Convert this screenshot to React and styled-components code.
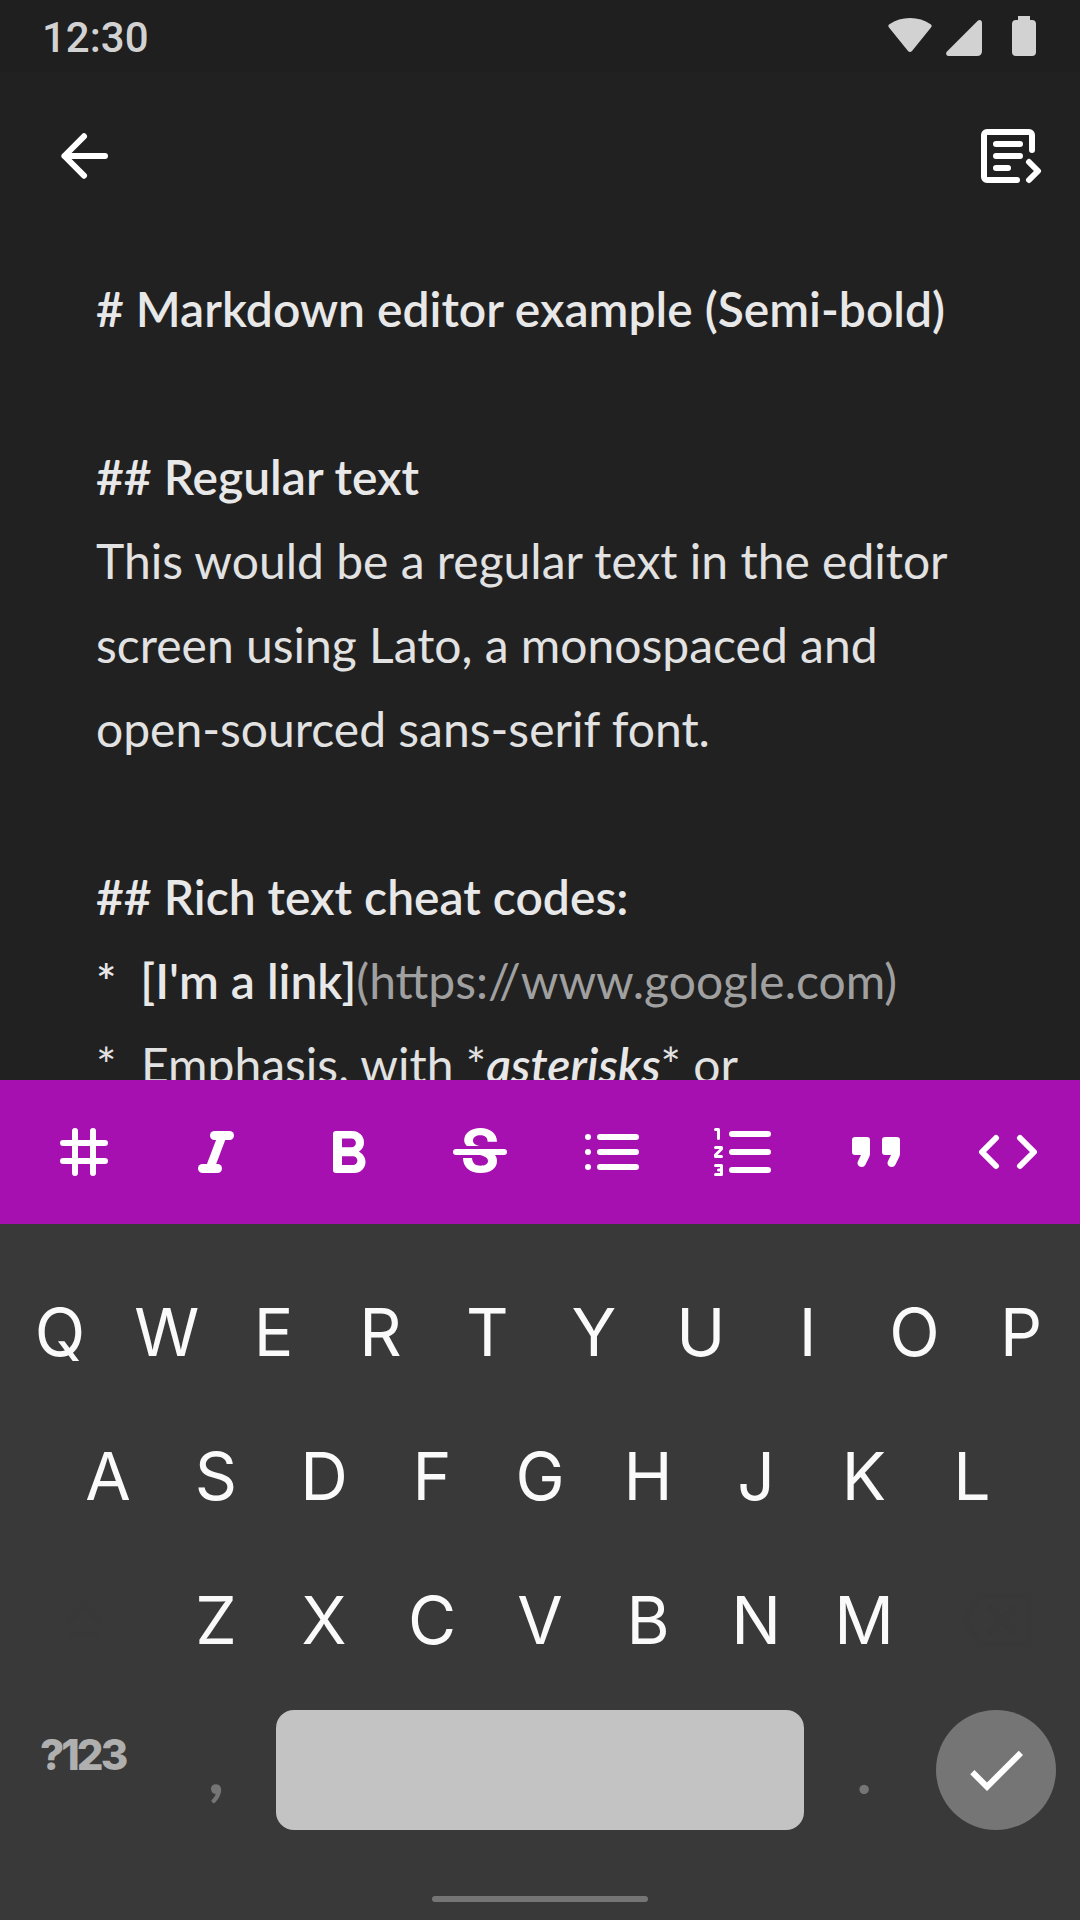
import React from "react";
import styled, { createGlobalStyle } from "styled-components";

const GlobalStyle = createGlobalStyle`
  * { box-sizing: border-box; }
  html, body { margin: 0; padding: 0; background: #212121; }
  button { border: 0; padding: 0; background: none; color: inherit; font: inherit; }
`;

const Screen = styled.div`
  width: 1080px;
  height: 1920px;
  display: flex;
  flex-direction: column;
  overflow: hidden;
  background: #212121;
`;

const StatusBar = styled.header`
  height: 72px;
  flex: none;
  display: flex;
  align-items: center;
  justify-content: space-between;
  padding: 0 36px 0 42px;
  background: #1f1f1f;
  color: #d2d2d2;
`;

const Clock = styled.span`
  font: 500 42px/72px Roboto, sans-serif;
  padding-top: 4px;
`;

const StatusIcons = styled.div`
  display: flex;
`;

const AppBar = styled.nav`
  height: 168px;
  flex: none;
  display: flex;
  align-items: center;
  justify-content: space-between;
  padding: 0 36px 0 48px;
  color: #fff;
`;

const IconButton = styled.button`
  width: 72px;
  height: 72px;
  display: block;
`;

const Icon = styled.svg`
  display: block;
  width: ${(p) => p.$w || 72}px;
  height: ${(p) => p.$h || 72}px;
  fill: none;
  stroke: currentColor;
  stroke-width: 6;
  stroke-linecap: round;
  stroke-linejoin: round;
`;

const SolidIcon = styled(Icon)`
  fill: currentColor;
  stroke: none;
`;

const FineStroke = styled.path`
  stroke-width: 3;
`;

const Editor = styled.main`
  flex: none;
  height: 840px;
  padding: 27px 96px 0;
  overflow: hidden;
  color: #e2e2e2;
  font: 400 48px/84px Lato, sans-serif;
`;

const Line = styled.p`
  margin: 0;
  height: 84px;
  white-space: pre;
`;

const HeadingLine = styled(Line)`
  color: #e8e8e8;
  font-weight: 600;
`;

const Strong = styled.span`
  color: #e8e8e8;
  font-weight: 600;
  font-style: ${(p) => (p.$italic ? "italic" : "normal")};
`;

const Url = styled.span`
  color: #a0a0a0;
`;

const Toolbar = styled.div`
  height: 144px;
  flex: none;
  display: flex;
  align-items: center;
  gap: 60px;
  padding: 0 36px 0 48px;
  background: #a610b0;
  color: #fff;
`;

const Keyboard = styled.section`
  flex: 1;
  display: flex;
  flex-direction: column;
  background: #393939;
  color: #fafafa;
  padding-top: 36px;
`;

const KeyRow = styled.div`
  height: 144px;
  flex: none;
  display: flex;
  align-items: center;
  padding-left: ${(p) => p.$inset}px;
`;

const Key = styled.button`
  width: ${(p) => p.$w || 108}px;
  flex: none;
  font: 400 66px/144px Inter, sans-serif;
  text-align: center;
`;

const GhostKey = styled.button`
  display: flex;
  width: ${(p) => p.$w}px;
  height: 72px;
  padding-left: ${(p) => p.$lead}px;
  color: #383838;
`;

const BottomRow = styled.div`
  height: 120px;
  margin-top: 18px;
  display: flex;
  padding: 0 24px 0 40px;
`;

const ModeKey = styled.button`
  width: 130px;
  height: 90px;
  text-align: left;
  color: #afafaf;
  font: 800 42px/90px Inter, sans-serif;
  letter-spacing: -3px;
`;

const PunctKey = styled.button`
  width: ${(p) => p.$w}px;
  margin-right: ${(p) => p.$after || 0}px;
  color: #757575;
  font: ${(p) => p.$weight} ${(p) => p.$size}px/120px Lato, sans-serif;
  text-align: center;
`;

const SpaceKey = styled.button`
  width: 528px;
  height: 120px;
  border-radius: 18px;
  background: #c3c3c3;
`;

const EnterKey = styled.button`
  width: 120px;
  height: 120px;
  margin-left: auto;
  display: grid;
  place-items: center;
  border-radius: 50%;
  background: #757575;
  color: #fff;
`;

const HomeIndicator = styled.div`
  width: 216px;
  height: 6px;
  margin: auto auto 18px;
  border-radius: 3px;
  background: #757575;
`;

const ROW_1 = "QWERTYUIOP".split("");
const ROW_2 = "ASDFGHJKL".split("");
const ROW_3 = "ZXCVBNM".split("");

const TOOLS = [
  {
    label: "Heading",
    art: (
      <Icon viewBox="0 0 72 72">
        <path d="M27 15V57M45 15V57M15 27H57M15 45H57" />
      </Icon>
    ),
  },
  {
    label: "Italic",
    art: (
      <SolidIcon viewBox="0 0 72 72">
        <rect x="30" y="15" width="24" height="9" rx="4.5" />
        <rect x="18" y="48" width="24" height="9" rx="4.5" />
        <path d="M36.8 22H46L35.4 50H26.2Z" />
      </SolidIcon>
    ),
  },
  {
    label: "Bold",
    art: (
      <SolidIcon viewBox="0 0 72 72" fillRule="evenodd">
        <path d="M24 15H40.5A11.5 11.5 0 0 1 52 26.5C52 30.5 50 34 46.8 35.7C50.8 37.5 53.5 41.5 53.5 46A11 11 0 0 1 42.5 57H24A3 3 0 0 1 21 54V18A3 3 0 0 1 24 15ZM30 22.5V31.3H39.5A4.4 4.4 0 0 0 39.5 22.5ZM30 40.2V49H41A4.4 4.4 0 0 0 41 40.2Z" />
      </SolidIcon>
    ),
  },
  {
    label: "Strikethrough",
    art: (
      <SolidIcon viewBox="0 0 72 72">
        <rect x="9" y="33" width="54" height="6" rx="3" />
        <path d="M53 25.7H43.6C43.6 21.5 41 19.3 36.5 19.3C32 19.3 29 21.3 29 24.7C29 27.5 31.5 29 36 30H22.8C21 28 20.2 26.5 20.2 24.3C20.2 17 27 12 36.5 12C46 12 53 17.5 53 25.7Z" />
        <path d="M19 42H28C28.5 47.5 31.5 49.7 36.5 49.7C41 49.7 44 48 44 45C44 42 41.5 40.5 36 39V37H51V39C52.5 41 53 42.8 53 45C53 52.5 46.5 57 36.5 57C26 57 19 51 19 42Z" />
      </SolidIcon>
    ),
  },
  {
    label: "Bulleted list",
    art: (
      <Icon viewBox="0 0 72 72">
        <path d="M12 21H12.01M12 36H12.01M12 51H12.01M24 21H60M24 36H60M24 51H60" />
      </Icon>
    ),
  },
  {
    label: "Numbered list",
    art: (
      <Icon viewBox="0 0 72 72">
        <path d="M24 18H60M24 36H60M24 54H60" />
        <FineStroke d="M7.5 13.5H10.5V22.5M7.5 31.5H13.5V33L7.5 39V40.5H13.5M7.5 49.5H13.5V58.5H7.5M10.5 54H13.5" />
      </Icon>
    ),
  },
  {
    label: "Quote",
    art: (
      <SolidIcon viewBox="0 0 72 72">
        <path d="M15 21H27A3 3 0 0 1 30 24V37.5Q30 39.4 29.2 41L25.4 48.8A4 4 0 0 1 21.6 51A4 4 0 0 1 17.8 45.4L21 39H15A3 3 0 0 1 12 36V24A3 3 0 0 1 15 21Z" />
        <path d="M45 21H57A3 3 0 0 1 60 24V37.5Q60 39.4 59.2 41L55.4 48.8A4 4 0 0 1 51.6 51A4 4 0 0 1 47.8 45.4L51 39H45A3 3 0 0 1 42 36V24A3 3 0 0 1 45 21Z" />
      </SolidIcon>
    ),
  },
  {
    label: "Code",
    art: (
      <Icon viewBox="0 0 72 72">
        <path d="M24 22L10 36L24 50M48 22L62 36L48 50" />
      </Icon>
    ),
  },
];

export default function App() {
  return (
    <>
      <GlobalStyle />
      <Screen>
        <StatusBar>
          <Clock>12:30</Clock>
          <StatusIcons>
            <SolidIcon $w={156} $h={72} viewBox="888 0 156 72">
              <path d="M889 27.4Q887.4 25.5 889.4 24.2Q898.5 18 910 18Q921.5 18 930.6 24.2Q932.6 25.5 931 27.4L912 51Q910 53 908 51Z" />
              <path d="M947 51.5L977.5 21Q979.2 19.6 980.7 20.3Q982 21 982 23V51Q982 56 977 56H949Q946.9 56 946.2 54.5Q945.7 53 947 51.5Z" />
              <path d="M1018 16H1030V20H1032A4 4 0 0 1 1036 24V52A4 4 0 0 1 1032 56H1016A4 4 0 0 1 1012 52V24A4 4 0 0 1 1016 20H1018Z" />
            </SolidIcon>
          </StatusIcons>
        </StatusBar>

        <AppBar>
          <IconButton aria-label="Back">
            <Icon viewBox="0 0 72 72">
              <path d="M57 36H16.5M36 16.3L16.4 36L36 55.7" />
            </Icon>
          </IconButton>
          <IconButton aria-label="Preview">
            <Icon viewBox="0 0 72 72">
              <path d="M60 30V15A3 3 0 0 0 57 12H15A3 3 0 0 0 12 15V57A3 3 0 0 0 15 60H45M24 24H48M24 36H48M24 48H36M57 42L66 51L57 60" />
            </Icon>
          </IconButton>
        </AppBar>

        <Editor>
          <HeadingLine># Markdown editor example (Semi-bold)</HeadingLine>
          <Line />
          <HeadingLine>## Regular text</HeadingLine>
          <Line>This would be a regular text in the editor</Line>
          <Line>screen using Lato, a monospaced and</Line>
          <Line>open-sourced sans-serif font.</Line>
          <Line />
          <HeadingLine>## Rich text cheat codes:</HeadingLine>
          <Line>
            <Strong>{"*  [I'm a link]"}</Strong>
            <Url>(https://www.google.com)</Url>
          </Line>
          <Line>
            {"*  Emphasis, with *"}
            <Strong $italic>asterisks</Strong>
            {"* or"}
          </Line>
        </Editor>

        <Toolbar>
          {TOOLS.map((t) => (
            <IconButton key={t.label} aria-label={t.label}>
              {t.art}
            </IconButton>
          ))}
        </Toolbar>

        <Keyboard>
          <KeyRow $inset={6.6}>
            {ROW_1.map((k) => (
              <Key key={k} $w={106.8}>{k}</Key>
            ))}
          </KeyRow>
          <KeyRow $inset={54}>
            {ROW_2.map((k) => (
              <Key key={k}>{k}</Key>
            ))}
          </KeyRow>
          <KeyRow $inset={0}>
            <GhostKey aria-label="Shift" $w={162} $lead={48}>
              <SolidIcon viewBox="0 0 24 24">
                <path d="M12 8.41L16.59 13 18 11.59l-6-6-6 6L7.41 13 12 8.41zM6 18h12v-2H6v2z" />
              </SolidIcon>
            </GhostKey>
            {ROW_3.map((k) => (
              <Key key={k}>{k}</Key>
            ))}
            <GhostKey aria-label="Backspace" $w={162} $lead={42}>
              <SolidIcon viewBox="0 0 24 24">
                <path d="M22 3H7c-.69 0-1.23.35-1.59.88L0 12l5.41 8.11c.36.53.9.89 1.59.89h15c1.1 0 2-.9 2-2V5c0-1.1-.9-2-2-2zm0 16H7.07L2.4 12l4.66-7H22v14zm-11.59-2L14 13.41 17.59 17 19 15.59 15.41 12 19 8.41 17.59 7 14 10.59 10.41 7 9 8.41 12.59 12 9 15.59z" />
              </SolidIcon>
            </GhostKey>
          </KeyRow>
          <BottomRow>
            <ModeKey>?123</ModeKey>
            <PunctKey $w={92} $after={14} $weight={900} $size={64}>,</PunctKey>
            <SpaceKey aria-label="Space" />
            <PunctKey $w={120} $weight={700} $size={62}>.</PunctKey>
            <EnterKey aria-label="Done">
              <SolidIcon viewBox="0 0 24 24">
                <path d="M9 16.17L4.83 12l-1.42 1.41L9 19 21 7l-1.41-1.41z" />
              </SolidIcon>
            </EnterKey>
          </BottomRow>
          <HomeIndicator />
        </Keyboard>
      </Screen>
    </>
  );
}
